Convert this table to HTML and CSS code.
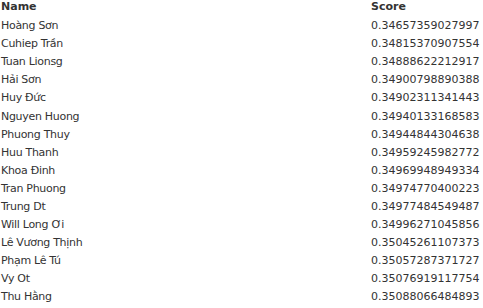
FILE: index.html
```html
<!DOCTYPE html>
<html>
<head>
<meta charset="utf-8">
<link rel="stylesheet" href="styles.css">
</head>
<body>
<table class="scores">
<thead><tr><th class="name">Name</th><th class="score">Score</th></tr></thead>
<tbody>
<tr><td class="name">Hoàng Sơn</td><td class="score">0.34657359027997</td></tr>
<tr><td class="name">Cuhiep Trần</td><td class="score">0.34815370907554</td></tr>
<tr><td class="name">Tuan Lionsg</td><td class="score">0.34888622212917</td></tr>
<tr><td class="name">Hải Sơn</td><td class="score">0.34900798890388</td></tr>
<tr><td class="name">Huy Đức</td><td class="score">0.34902311341443</td></tr>
<tr><td class="name">Nguyen Huong</td><td class="score">0.34940133168583</td></tr>
<tr><td class="name">Phuong Thuy</td><td class="score">0.34944844304638</td></tr>
<tr><td class="name">Huu Thanh</td><td class="score">0.34959245982772</td></tr>
<tr><td class="name">Khoa Đinh</td><td class="score">0.34969948949334</td></tr>
<tr><td class="name">Tran Phuong</td><td class="score">0.34974770400223</td></tr>
<tr><td class="name">Trung Dt</td><td class="score">0.34977484549487</td></tr>
<tr><td class="name">Will Long Ơi</td><td class="score">0.34996271045856</td></tr>
<tr><td class="name">Lê Vương Thịnh</td><td class="score">0.35045261107373</td></tr>
<tr><td class="name">Phạm Lê Tú</td><td class="score">0.35057287371727</td></tr>
<tr><td class="name">Vy Ot</td><td class="score">0.35076919117754</td></tr>
<tr><td class="name">Thu Hằng</td><td class="score">0.35088066484893</td></tr>
</tbody>
</table>
</body>
</html>
```
FILE: styles.css
```css
html, body {
  margin: 0;
  padding: 0;
  background: #fff;
}
body {
  font-family: "DejaVu Sans", Verdana, sans-serif;
  font-size: 11px;
  color: #333;
}
.scores {
  border-collapse: collapse;
  width: 483px;
  margin-top: -2px;
}
.scores th, .scores td {
  text-align: left;
  padding: 0 0 0 1px;
  height: 18px;
  line-height: 18px;
  white-space: nowrap;
}
.scores td {
  height: 18.1px;
}
.scores th {
  font-weight: bold;
  height: 18px;
  padding-bottom: 1px;
}
.scores .name {
  width: 369px;
  letter-spacing: -0.3px;
}
.scores th.name {
  letter-spacing: 0;
}
```
